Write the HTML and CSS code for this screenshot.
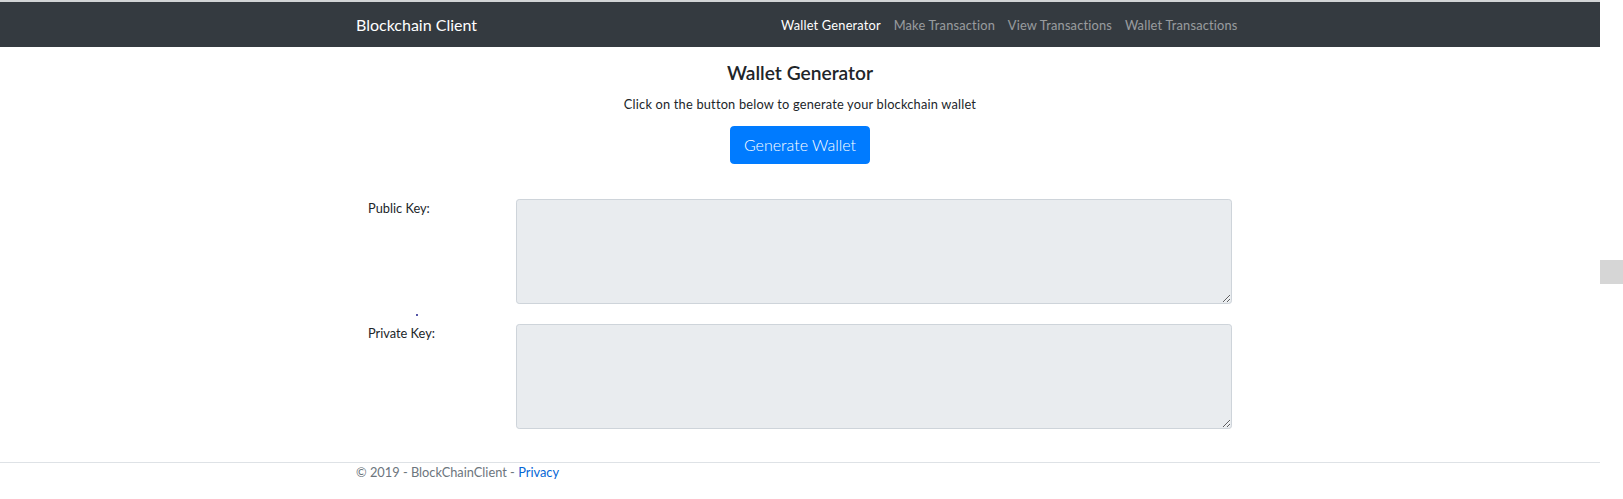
FILE: index.html
```html
<!DOCTYPE html>
<html lang="en">
<head>
<meta charset="utf-8">
<title>Wallet Generator - BlockChainClient</title>
<link rel="stylesheet" href="styles.css">
</head>
<body>
<header class="navbar">
  <div class="container nav-inner">
    <a class="brand" href="#">Blockchain Client</a>
    <ul class="nav-links">
      <li><a class="nav-link active" href="#">Wallet Generator</a></li>
      <li><a class="nav-link" href="#">Make Transaction</a></li>
      <li><a class="nav-link" href="#">View Transactions</a></li>
      <li><a class="nav-link" href="#">Wallet Transactions</a></li>
    </ul>
  </div>
</header>
<main class="container main">
  <div class="intro">
    <h4 class="title">Wallet Generator</h4>
    <p class="lead-text">Click on the button below to generate your blockchain wallet</p>
    <button class="btn-primary" type="button">Generate Wallet</button>
  </div>
  <form class="key-form">
    <div class="form-row">
      <label class="key-label" for="pub">Public Key:</label>
      <textarea id="pub" class="key-box" readonly></textarea>
    </div>
    <div class="form-row">
      <label class="key-label" for="priv">Private Key:</label>
      <textarea id="priv" class="key-box" readonly></textarea>
    </div>
    <span class="dot"></span>
  </form>
</main>
<footer class="footer">
  <div class="container footer-inner">&copy; 2019 - BlockChainClient - <a class="footer-link" href="#">Privacy</a></div>
</footer>
<div class="scroll-thumb"></div>
</body>
</html>
```
FILE: styles.css
```css
html {
  overflow: hidden;
  background: #fff;
}
body {
  margin: 0;
  width: 1600px;
  border-top: 2px solid #d2d4d6;
  font-family: Lato, "Open Sans", sans-serif;
  font-size: 12.8px;
  line-height: 1.5;
  color: #212529;
  min-height: 497px;
}
.container {
  width: 888px;
  margin: 0 auto;
}
.navbar {
  background: #343a40;
  height: 45px;
  display: flex;
  align-items: center;
}
.nav-inner {
  display: flex;
  justify-content: space-between;
  align-items: center;
}
.brand {
  color: #fff;
  font-size: 16px;
  text-decoration: none;
  line-height: 24px;
}
.nav-links {
  list-style: none;
  margin: 2px 0 0 0;
  padding: 0;
  display: flex;
}
.nav-link {
  display: block;
  padding: 0 6.4px;
  color: rgba(255, 255, 255, 0.5);
  text-decoration: none;
  font-size: 12.8px;
  letter-spacing: 0.2px;
  line-height: 19px;
}
.nav-link.active {
  color: #fff;
}
.intro {
  display: flex;
  flex-direction: column;
  align-items: center;
}
.title {
  margin: 14px 0 11px;
  font-size: 19.2px;
  line-height: 1.2;
  font-weight: 600;
}
.lead-text {
  margin: 0 0 12px;
  letter-spacing: 0.2px;
}
.btn-primary {
  font-family: inherit;
  font-size: 16px;
  font-weight: 300;
  line-height: 24px;
  padding: 6px 12.8px;
  color: #fff;
  background: #007bff;
  border: 1px solid #007bff;
  border-radius: 3.8px;
}
.key-form {
  position: relative;
  margin-top: 35px;
  padding: 0 12px;
  display: flex;
  flex-direction: column;
  gap: 20px;
}
.form-row {
  display: grid;
  grid-template-columns: 148px 1fr;
}
.key-label {
  line-height: 19.2px;
}
.key-box {
  box-sizing: border-box;
  width: 716px;
  height: 105px;
  background: #e9ecef;
  border: 1px solid #ced4da;
  border-radius: 3.2px;
  font-family: inherit;
  font-size: 12.8px;
  margin: 0;
  padding: 4.8px 9.6px;
}
.dot {
  position: absolute;
  left: 60px;
  top: 115px;
  width: 2px;
  height: 2px;
  background: #1c1c8a;
  border-radius: 1px;
}
.footer {
  margin-top: 33px;
  border-top: 1px solid #dee2e6;
  color: #6c757d;
}
.footer-inner {
  line-height: 19.5px;
}
.footer-link {
  color: #0366d6;
  text-decoration: none;
}
.scroll-thumb {
  position: fixed;
  right: 0;
  top: 260px;
  width: 23px;
  height: 24px;
  background: #d6d6d6;
}
```
